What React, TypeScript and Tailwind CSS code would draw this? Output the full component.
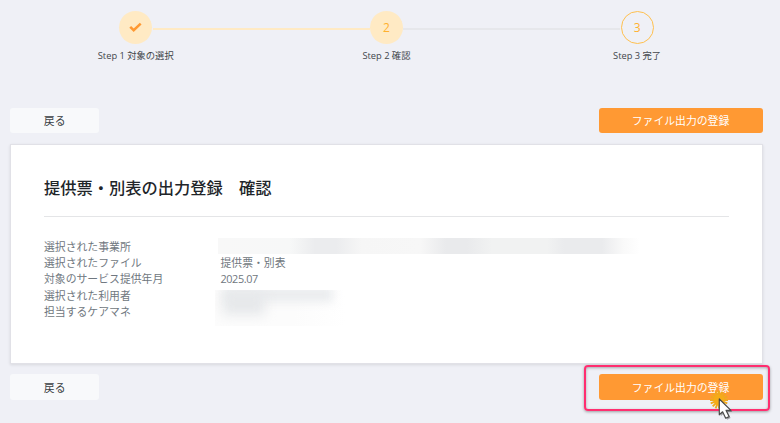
import type { ReactNode } from 'react';

type StepState = 'done' | 'current' | 'todo';

function Step({ label, state, children }: { label: string; state: StepState; children: ReactNode }) {
  return (
    <li className="relative flex flex-1 flex-col items-center">
      {state !== 'todo' && (
        <span
          className={`absolute top-[17px] left-[calc(50%+17px)] h-[2px] w-[217px] ${
            state === 'done' ? 'bg-[#ffeac4]' : 'bg-[#e6e7eb]'
          }`}
        />
      )}
      <span
        className={`flex size-[33px] items-center justify-center rounded-full text-[12px] leading-none text-[#ffb02e] ${
          state === 'todo' ? 'border border-[#ffc04f]' : 'bg-[#ffeac4]'
        }`}
      >
        {children}
      </span>
      <span className="mt-[5px] text-[9.3px] leading-[14px] whitespace-nowrap text-[#42464b]">{label}</span>
    </li>
  );
}

function Actions({ className }: { className: string }) {
  return (
    <div className={`flex justify-between ${className}`}>
      <button className="w-[88.5px] rounded-[3px] bg-[#f8f9fb] pt-px text-[10.85px] leading-[16px] text-[#3a3e43]">
        戻る
      </button>
      <button className="w-[164px] rounded-[3px] bg-[#ff9933] pt-px text-[10.85px] leading-[16px] text-white">
        ファイル出力の登録
      </button>
    </div>
  );
}

function Row({ label, children }: { label: string; children?: ReactNode }) {
  return (
    <div className="flex h-[16.3px]">
      <dt className="w-[176.5px]">{label}</dt>
      <dd className="relative">{children}</dd>
    </div>
  );
}

function Cursor() {
  return (
    <svg className="absolute top-[386px] left-[706px]" width="34" height="37" viewBox="0 0 34 37">
      <g stroke="#f0a91c" strokeWidth="1.9" strokeLinecap="butt">
        <path d="M13 4.5v18M4 14h18M6.7 7.7l12.6 12.6M19.3 7.7L6.7 20.3M9.6 5.7l6.8 16.6M16.4 5.7L9.6 22.3M4.7 10.6l16.6 6.8M4.7 17.4l16.6-6.8" />
      </g>
      <circle cx="13" cy="14" r="5.5" fill="#f5ac18" />
      <path
        d="M13.3 13v15.8l3.3-3 3.1 6.4 3.4-1.6-3-6.2h4.8z"
        fill="#000"
        opacity=".3"
        transform="translate(1.5 1.5)"
      />
      <path
        d="M13.3 13v15.8l3.3-3 3.1 6.4 3.4-1.6-3-6.2h4.8z"
        fill="#fff"
        stroke="#4a4a4a"
        strokeWidth="1.2"
        strokeLinejoin="round"
      />
    </svg>
  );
}

export default function App() {
  return (
    <main className="relative h-[423px] w-[780px] overflow-hidden bg-[#eff0f6] pr-[17.5px] pl-[10.4px] font-['Open_Sans','Noto_Sans_CJK_JP',sans-serif]">
      <ol className="flex h-[108px] pt-[11px]">
        <Step label="Step 1 対象の選択" state="done">
          <svg className="-mt-[2px]" width="13" height="10" viewBox="0 0 13 10">
            <path d="M1.2 4.8l3.5 3.4 7-6.6" fill="none" stroke="#ff9933" strokeWidth="2.5" />
          </svg>
        </Step>
        <Step label="Step 2 確認" state="current">
          2
        </Step>
        <Step label="Step 3 完了" state="todo">
          3
        </Step>
      </ol>

      <Actions className="h-[25px]" />

      <section className="mt-[11px] h-[219.5px] border border-[#e1e1e7] bg-white px-[32.6px] pt-[29px] shadow-[0_1px_3px_rgba(0,0,0,0.1)]">
        <h1 className="h-[42.5px] border-b border-[#e4e5e7] text-[16.25px] leading-[28px] font-medium text-[#212529]">
          提供票・別表の出力登録　確認
        </h1>
        <dl className="mt-[22.3px] text-[10.85px] leading-[16.3px] text-[#6f7780]">
          <Row label="選択された事業所">
            <div className="absolute -top-px -left-[2px] h-[16px] w-[422px] bg-[linear-gradient(90deg,#f8f8f8_0%,#f7f8f8_17%,#ebecee_23%,#ebecee_28%,#f6f6f6_34%,#f7f7f7_48%,#e9eaec_54%,#e9eaec_59%,#f1f2f2_65%,#f1f2f2_78%,#eaebed_82%,#eaebed_91%,#f9f9f9_96%,#fff_100%)]" />
          </Row>
          <Row label="選択されたファイル">提供票・別表</Row>
          <Row label="対象のサービス提供年月">
            <span className="tracking-[-0.4px]">2025.07</span>
          </Row>
          <Row label="選択された利用者">
            <div className="absolute top-[2.4px] -left-[5px] h-[36px] w-[131px] overflow-hidden bg-[linear-gradient(90deg,#fcfcfc_60%,#fff)]">
              <div className="absolute -top-[3px] left-[8px] h-[15px] w-[110px] bg-[#eaecee] blur-[5px]" />
              <div className="absolute top-[2px] left-[8px] h-[23px] w-[42px] bg-[#e6e8ea] blur-[6px]" />
            </div>
          </Row>
          <Row label="担当するケアマネ" />
        </dl>
      </section>

      <Actions className="mt-[10.5px] h-[26px]" />

      <div className="absolute top-[365px] left-[584px] h-[46px] w-[186.4px] rounded-[4px] border-[2px] border-[#ff2e70] shadow-[0_1px_3px_rgba(0,0,0,0.35),inset_0_1px_3px_rgba(0,0,0,0.3)]" />
      <Cursor />
    </main>
  );
}
